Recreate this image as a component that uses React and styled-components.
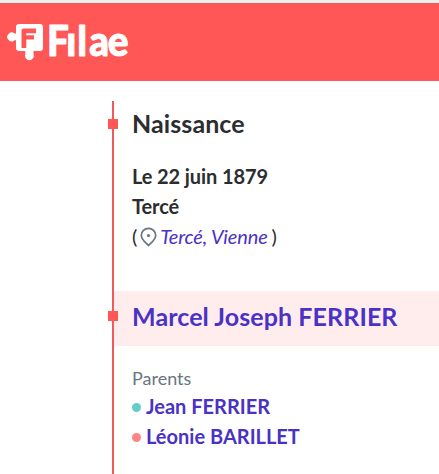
/**
 *
 * Birth record timeline
 *
 */

import React from 'react';
import styled, { createGlobalStyle } from 'styled-components';

const GlobalStyle = createGlobalStyle`
  * {
    box-sizing: border-box;
  }

  body {
    margin: 0;
    background: #ffffff;
    color: #2b2d30;
    font-family: Lato, 'Liberation Sans', sans-serif;
    font-size: 20px;
    line-height: 30px;
  }
`;

const Page = styled.div`
  display: flex;
  flex-direction: column;
  height: 474px;
  overflow: hidden;
`;

const Header = styled.header`
  flex: none;
  display: flex;
  align-items: flex-start;
  height: 81px;
  padding: 5px 0 0 6px;
  border-top: 3px solid #efefef;
  background: #ff5656;
`;

const Timeline = styled.main`
  flex: 1;
  margin: 20px 0 0 112px;
  border-left: 2px solid #ee5a5e;
`;

const Marker = styled.span`
  flex: none;
  width: 10px;
  height: 10px;
  margin-left: -6px;
  background: #ff5656;
`;

const Heading = styled.div`
  display: flex;
  align-items: center;
  gap: 14px;
  height: ${props => (props.highlighted ? '55px' : '46px')};
  padding-bottom: ${props => (props.highlighted ? '5px' : '0')};
  background: ${props => (props.highlighted ? '#ffeded' : 'transparent')};
`;

const Title = styled.h2`
  margin: 0;
  padding-bottom: ${props => (props.color ? '0' : '2px')};
  color: ${props => props.color || 'inherit'};
  font-size: 25px;
  font-weight: 700;
  letter-spacing: 0.09px;
  line-height: 30px;
  white-space: nowrap;
`;

const Details = styled.div`
  height: 144px;
  padding: 14px 0 0 18px;
  font-weight: 700;
  letter-spacing: -0.1px;
`;

const Place = styled.div`
  display: flex;
  align-items: center;
  font-weight: 400;

  svg {
    margin: 1px 2px 0 3px;
  }
`;

const PlaceLink = styled.a`
  margin-right: 4px;
  color: #4932c5;
  font-style: italic;
  letter-spacing: -0.15px;
`;

const Parents = styled.section`
  padding: 17px 0 0 18px;
`;

const Label = styled.div`
  height: 28px;
  color: #697681;
  font-size: 18px;
`;

const Person = styled.a`
  display: flex;
  align-items: center;
  gap: 5px;
  color: #4932c5;
  font-weight: 700;

  &::before {
    content: '';
    width: 9px;
    height: 9px;
    margin-top: 2px;
    border-radius: 50%;
    background: ${props => (props.gender === 'male' ? '#65cccc' : '#ff8585')};
  }
`;

function Logo() {
  return (
    <svg width="130" height="62" viewBox="6 8 130 62" fill="#fff">
      <path
        fillRule="evenodd"
        d="M19 24h21q3 0 3 3v21q0 3-3 3h-6.500v3.200a4.400 4.400 0 1 1-8.200 0V51H19q-3 0-3-3v-7.700h-1.500a4.400 4.400 0 1 1 0-6.800H16V27q0-3 3-3z
        M23.500 28.500q-2 0-2 2V48h4.800v-8.500H34v-4.300h-7.700v-2H36v-4.700z"
      />
      <text
        transform="translate(0 55.500) scale(0.93 1)"
        x="50.500 71.200 83.200 96 116"
        fontFamily="Lato, sans-serif"
        fontSize="41.500"
        fontWeight="900"
        stroke="#fff"
        strokeWidth="1"
        strokeLinejoin="round"
      >
        Fılae
      </text>
    </svg>
  );
}

function Pin() {
  return (
    <svg
      width="18"
      height="20"
      viewBox="0 0 18 20"
      fill="none"
      stroke="#697681"
      strokeWidth="1.700"
    >
      <path d="M8.500 18.500C6.200 15.800 1.300 12.600 1.300 8.400a7.200 7 0 0 1 14.400 0C15.700 12.600 10.800 15.800 8.500 18.500z" />
      <circle cx="8.500" cy="8.500" r="1.600" fill="#697681" stroke="none" />
    </svg>
  );
}

function App() {
  return (
    <>
      <GlobalStyle />
      <Page>
        <Header>
          <Logo />
        </Header>
        <Timeline>
          <Heading>
            <Marker />
            <Title>Naissance</Title>
          </Heading>
          <Details>
            <div>Le 22 juin 1879</div>
            <div>Tercé</div>
            <Place>
              (<Pin />
              <PlaceLink>Tercé, Vienne</PlaceLink>)
            </Place>
          </Details>
          <Heading highlighted>
            <Marker />
            <Title color="#4932c5">Marcel Joseph FERRIER</Title>
          </Heading>
          <Parents>
            <Label>Parents</Label>
            <Person gender="male">Jean FERRIER</Person>
            <Person gender="female">Léonie BARILLET</Person>
          </Parents>
        </Timeline>
      </Page>
    </>
  );
}

export default App;
